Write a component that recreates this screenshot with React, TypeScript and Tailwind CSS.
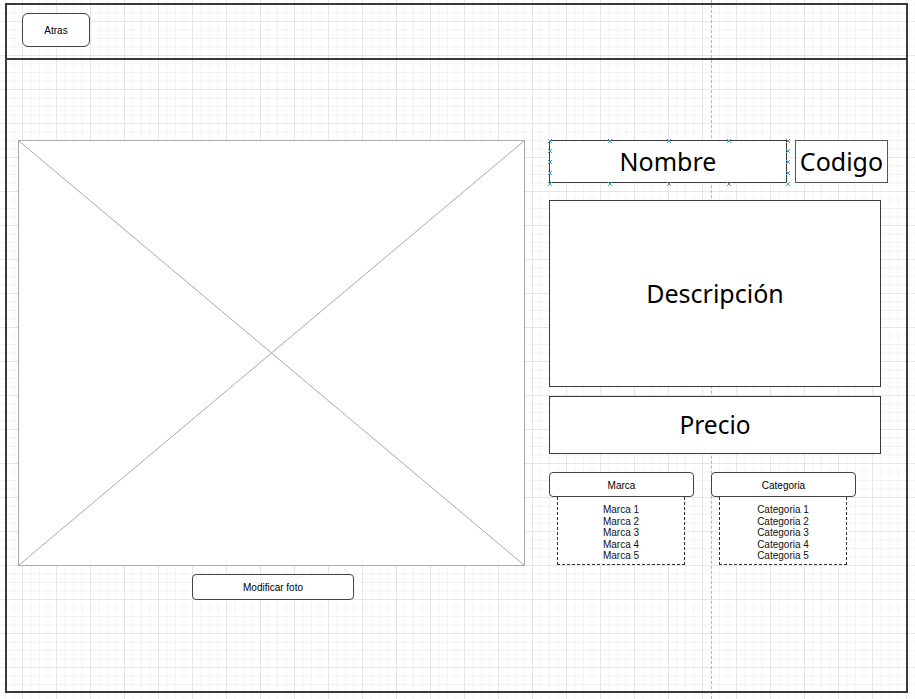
import React from "react";

const marcas = ["Marca 1", "Marca 2", "Marca 3", "Marca 4", "Marca 5"];
const categorias = ["Categoria 1", "Categoria 2", "Categoria 3", "Categoria 4", "Categoria 5"];

// selection handles shown on the Nombre box (x, y relative to the box)
const handles: [number, number, string][] = [
  [0, 0, "#3aa6e8"], [60, 0, "#3aa6e8"], [119, 0, "#3aa6e8"], [179, 0, "#3aa6e8"], [238, 0, "#888"],
  [0, 43, "#3aa6e8"], [60, 43, "#3aa6e8"], [119, 43, "#888"], [179, 43, "#888"], [238, 43, "#3aa6e8"],
  [0, 10, "#3aa6e8"], [0, 21, "#3aa6e8"], [0, 32, "#3aa6e8"],
  [238, 10, "#3aa6e8"], [238, 21, "#3aa6e8"], [238, 32, "#3aa6e8"],
];

function Handle({ x, y, color }: { x: number; y: number; color: string }) {
  return (
    <svg
      className="absolute"
      width="6"
      height="6"
      viewBox="0 0 6 6"
      style={{ left: x - 3, top: y - 3 }}
    >
      <path d="M1 1L5 5M5 1L1 5" stroke={color} strokeWidth="1" />
    </svg>
  );
}

function Dropdown({ title, items }: { title: string; items: string[] }) {
  return (
    <div className="flex flex-col">
      <div className="w-[145px] h-[25px] rounded-[4px] border border-[#444] bg-white flex items-center justify-center pt-[1px] text-[10px] text-black">
        {title}
      </div>
      <div className="ml-[8px] w-[128px] h-[68px] border border-t-0 border-dashed border-[#333] bg-white flex flex-col items-center pt-[7px] text-[10px] leading-[11.5px] text-[#111]">
        {items.map((it) => (
          <span key={it}>{it}</span>
        ))}
      </div>
    </div>
  );
}

export default function App() {
  return (
    <div className="relative w-[915px] h-[699px] overflow-hidden bg-white font-['Liberation_Sans',Arial,sans-serif] bg-[linear-gradient(to_right,#e6e6e6_1px,transparent_1px),linear-gradient(to_bottom,#e6e6e6_1px,transparent_1px),linear-gradient(to_right,#f4f4f4_1px,transparent_1px),linear-gradient(to_bottom,#f4f4f4_1px,transparent_1px)] bg-size-[34px_34px,34px_34px,8.5px_8.5px,8.5px_8.5px] bg-position-[22px_21px]">
      {/* guide line */}
      <div className="absolute left-[711px] top-0 bottom-0 border-l border-dashed border-[#b8b8b8]" />

      <div className="relative ml-[5px] mt-[3px] w-[903px] h-[690px] border-2 border-[#3a3a3a] flex flex-col">
        <div className="h-[55px] shrink-0 border-b-2 border-[#3a3a3a] pl-[15px] pt-[8px]">
          <button className="w-[68px] h-[34px] rounded-[6px] border border-[#444] bg-white text-[10px] text-black">
            Atras
          </button>
        </div>

        <div className="flex pl-[11px] pt-[80px]">
          <div className="flex flex-col">
            <div className="w-[507px] h-[426px] border border-[#aaa] bg-white">
              <svg width="100%" height="100%" viewBox="0 0 505 424" preserveAspectRatio="none">
                <path d="M0 0L505 424M505 0L0 424" stroke="#a8a8a8" strokeWidth="1" />
              </svg>
            </div>
            <button className="ml-[174px] mt-[8px] w-[162px] h-[26px] rounded-[4px] border border-[#444] bg-white text-[10px] text-black">
              Modificar foto
            </button>
          </div>

          <div className="ml-[24px] flex flex-col font-['Noto_Sans',sans-serif] text-black">
            <div className="flex">
              <div className="relative w-[238px] h-[43px] border-[1.5px] border-[#3a3a3a] bg-white flex items-center justify-center text-[25px]">
                Nombre
                {handles.map(([x, y, c], i) => (
                  <Handle key={i} x={x} y={y} color={c} />
                ))}
              </div>
              <div className="ml-[8px] w-[93px] h-[43px] border-[1.5px] border-[#555] bg-white flex items-center justify-center text-[25px]">
                Codigo
              </div>
            </div>
            <div className="mt-[17px] w-[332px] h-[187px] border-[1.5px] border-[#3a3a3a] bg-white flex items-center justify-center text-[25px]">
              Descripción
            </div>
            <div className="mt-[9px] w-[332px] h-[58px] border-[1.5px] border-[#3a3a3a] bg-white flex items-center justify-center text-[24.5px]">
              Precio
            </div>
            <div className="mt-[18px] flex gap-[17px] font-['Liberation_Sans',Arial,sans-serif]">
              <Dropdown title="Marca" items={marcas} />
              <Dropdown title="Categoria" items={categorias} />
            </div>
          </div>
        </div>
      </div>
    </div>
  );
}
